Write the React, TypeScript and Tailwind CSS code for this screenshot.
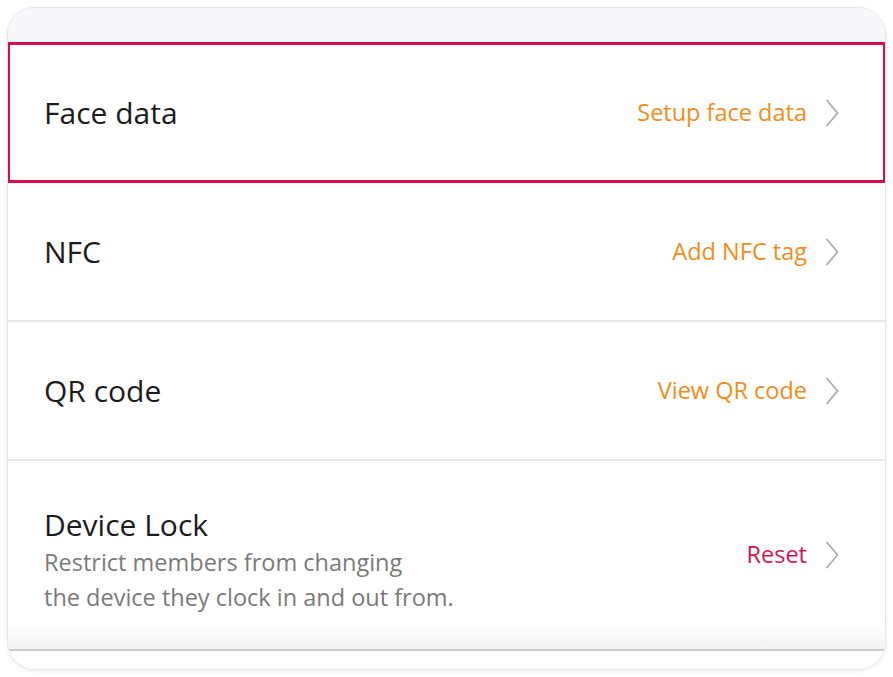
import React from 'react';

function Chevron() {
  return (
    <svg width="14" height="28" viewBox="0 0 14 28" className="shrink-0">
      <polyline points="2,1.5 12.5,14 2,26.5" fill="none" stroke="#ababab" strokeWidth="1.8" strokeLinecap="round" strokeLinejoin="round" />
    </svg>
  );
}

interface RowProps {
  title: string;
  action: string;
  actionColor: string;
  highlighted?: boolean;
}

function Row({ title, action, actionColor, highlighted }: RowProps) {
  return (
    <div
      className={
        highlighted
          ? 'h-[141px] flex items-center justify-between pl-[34px] pr-[44px] border-[3px] border-[#d40f4c] -mx-px shrink-0'
          : 'h-[139px] flex items-center justify-between pl-[36px] pr-[46px] border-b-2 border-[#e8e8e8] shrink-0'
      }
    >
      <span className="text-[30px] text-[#1c1c1c]">{title}</span>
      <div className="flex items-center gap-[18px]">
        <span className={`text-[23.5px] ${actionColor}`}>{action}</span>
        <Chevron />
      </div>
    </div>
  );
}

export default function App() {
  return (
    <div className="w-[893px] h-[677px] bg-white p-[7px]" style={{ fontFamily: '"Open Sans", sans-serif' }}>
      <div className="h-[663px] rounded-[28px] border border-[#e6e6e6] shadow-[0_1px_4px_rgba(0,0,0,0.08)] overflow-hidden bg-white flex flex-col">
        <div className="h-[34px] bg-[#f6f7fa] shrink-0" />
        <Row title="Face data" action="Setup face data" actionColor="text-[#f28c1a]" highlighted />
        <Row title="NFC" action="Add NFC tag" actionColor="text-[#f28c1a]" />
        <Row title="QR code" action="View QR code" actionColor="text-[#f28c1a]" />
        <div className="h-[188px] flex items-center justify-between pl-[36px] pr-[46px] bg-gradient-to-b from-white from-85% to-[#f3f3f3] shrink-0">
          <div className="flex flex-col mt-[10px]">
            <span className="text-[30px] text-[#1c1c1c] leading-[40px]">Device Lock</span>
            <span className="text-[23.5px] text-[#7a7a7a] leading-[35px]">
              Restrict members from changing
              <br />
              the device they clock in and out from.
            </span>
          </div>
          <div className="flex items-center gap-[18px]">
            <span className="text-[23.5px] text-[#d6154f]">Reset</span>
            <Chevron />
          </div>
        </div>
        <div className="h-[2px] bg-[#c9c9c9] shrink-0" />
        <div className="flex-1 bg-white" />
      </div>
    </div>
  );
}
